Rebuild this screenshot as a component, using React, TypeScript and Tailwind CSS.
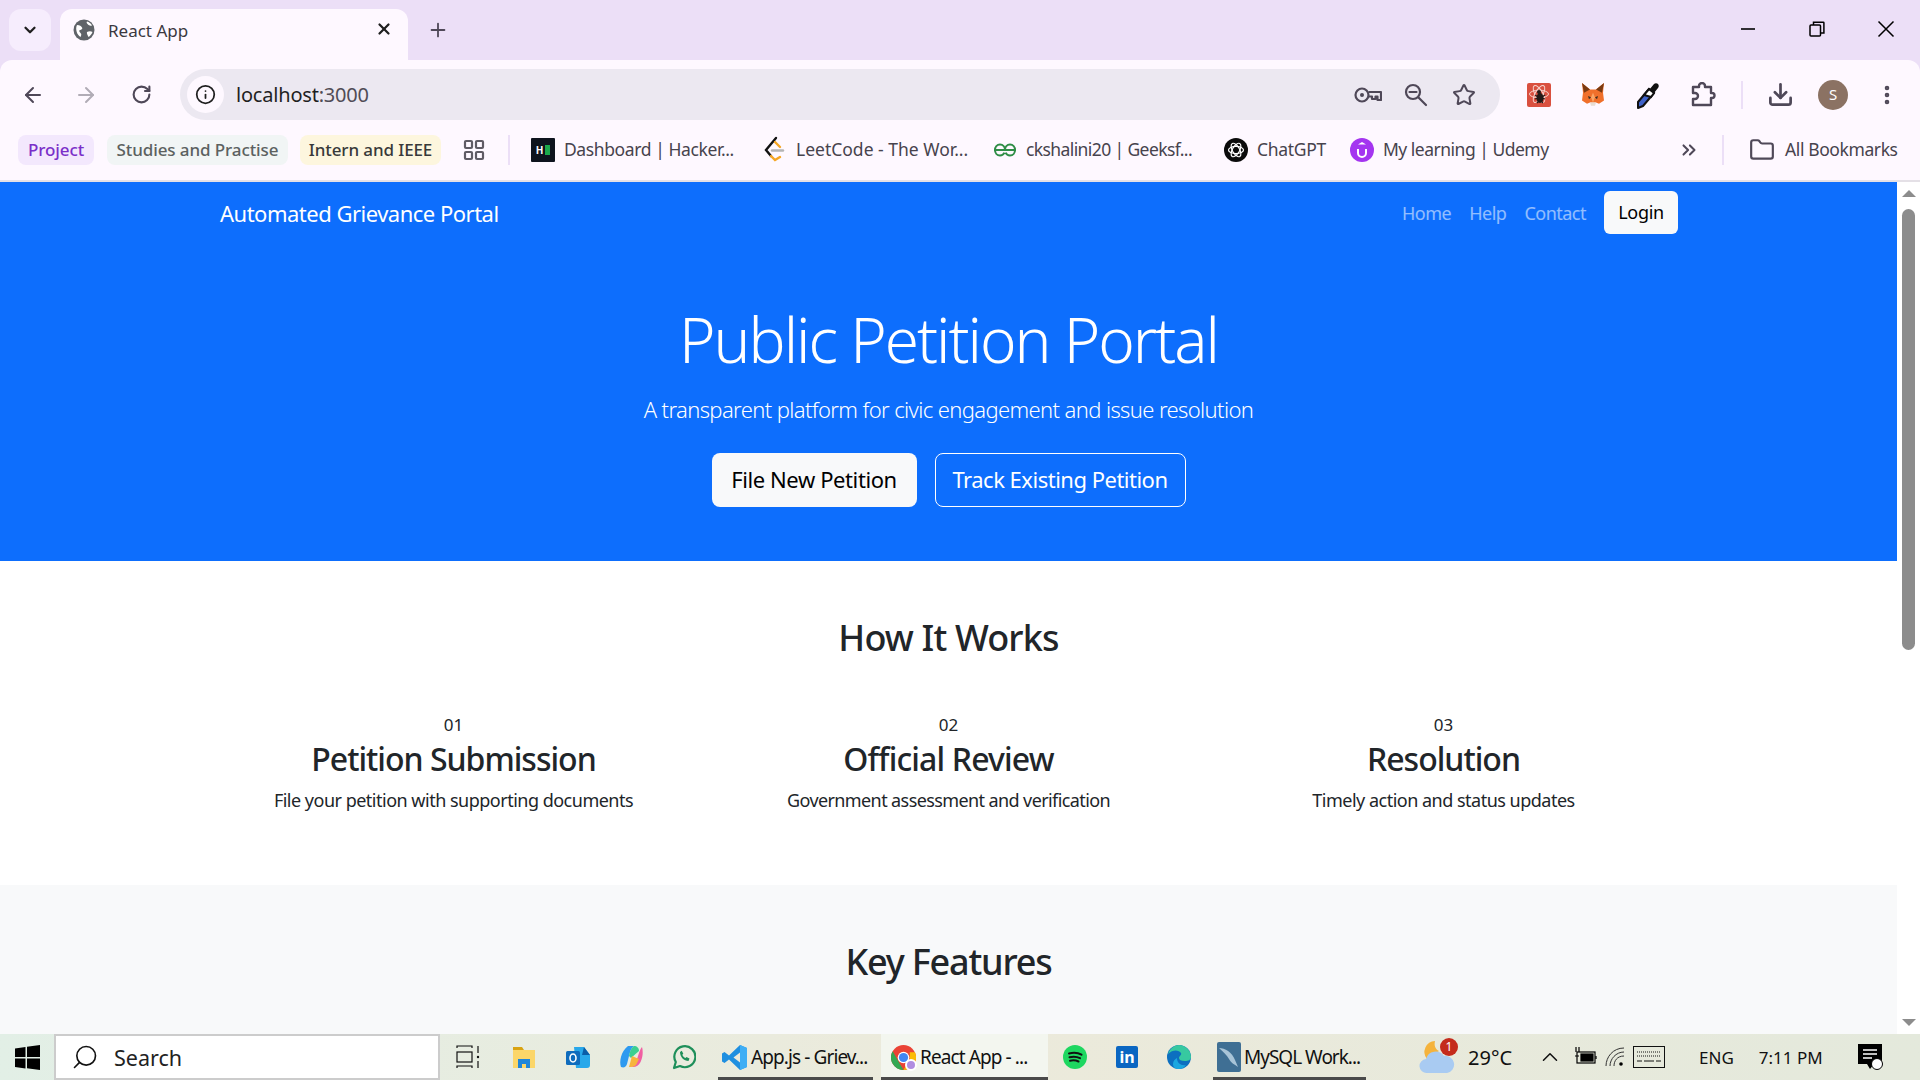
import React from 'react';
import { ArrowLeft, ArrowRight, ChevronDown, ChevronUp, ChevronsRight, Download, EllipsisVertical, Folder, Info, LayoutGrid, Plus, RotateCw, Search, Star, X } from 'lucide-react';

const Slot = ({ w, children }: { w: string; children: React.ReactNode }) => (
  <div className={`flex shrink-0 items-center justify-center ${w}`}>{children}</div>
);

const Globe = () => (
  <svg width="22" height="22" viewBox="0 0 22 22">
    <circle cx="11" cy="11" r="10.5" fill="#5f6368" />
    <path d="M4 6c3 0 4 1 5 2.500s-1 2.500-2 2.500-1 2 .5 3 .5 3 0 4C4 16 2 10 4 6zM14 2.500c2 .5 4 2 5 4-2 .5-3 0-4-1s-2-2-1-3zM14 13c2-1 4-1 5.500 0-1 2.500-2.500 4-4 5-1-2-2-4-1.500-5z" fill="#fff" />
  </svg>
);

const WindowControls = () => (
  <div className="ml-auto flex items-center">
    <Slot w="w-[69px]">
      <svg width="16" height="16" viewBox="0 0 16 16"><path d="M1 8h14" stroke="#000" strokeWidth="1.6" /></svg>
    </Slot>
    <Slot w="w-[69px]">
      <svg width="16" height="16" viewBox="0 0 16 16" fill="none" stroke="#000" strokeWidth="1.5">
        <rect x="1" y="4" width="10.5" height="11" rx="1" />
        <path d="M4.500 4V1.200h9.800a.6.6 0 0 1 .6.6V12h-3.400" />
      </svg>
    </Slot>
    <Slot w="w-[69px]">
      <svg width="18" height="18" viewBox="0 0 18 18"><path d="M1.500 1.500l15 15M16.500 1.500l-15 15" stroke="#000" strokeWidth="1.5" /></svg>
    </Slot>
  </div>
);

const KeyIcon = () => (
  <svg width="28" height="16" viewBox="0 0 28 16" fill="none" stroke="#4f4858" strokeWidth="2.2" strokeLinejoin="round">
    <circle cx="8" cy="8" r="6.500" />
    <circle cx="8" cy="8" r="2" fill="#4f4858" stroke="none" />
    <path d="M14.500 5H27v8h-3.500v-3.500h-2V12H18v-2.500h-3.500" />
  </svg>
);

const ZoomIcon = () => (
  <svg width="24" height="24" viewBox="0 0 24 24" fill="none" stroke="#4f4858" strokeWidth="2.200" strokeLinecap="round">
    <circle cx="9" cy="9" r="7" />
    <path d="M14.500 14.500L22 22M5.500 9h7" />
  </svg>
);

const ReactBug = () => (
  <svg width="24" height="24" viewBox="0 0 24 24">
    <rect width="24" height="24" rx="2" fill="#d9503f" />
    <g fill="none" stroke="#f7d5cf" strokeWidth="1">
      <ellipse cx="12" cy="11" rx="9.500" ry="3.800" />
      <ellipse cx="12" cy="11" rx="9.500" ry="3.800" transform="rotate(60 12 11)" />
      <ellipse cx="12" cy="11" rx="9.500" ry="3.800" transform="rotate(120 12 11)" />
    </g>
    <ellipse cx="13" cy="15" rx="3.500" ry="5" fill="#231a18" />
    <circle cx="12" cy="9" r="2" fill="#231a18" />
    <path d="M8 12l3 2M8 16l3-1M10 20l2-2M18 12l-3 2M18 16l-3-1M16 20l-2-2" stroke="#231a18" strokeWidth="1.200" />
  </svg>
);

const Fox = () => (
  <svg width="24" height="26" viewBox="0 0 24 24" preserveAspectRatio="none">
    <path d="M1 1l8 6h6l8-6-1 9 1 7-5 3-3-1H9l-3 1-5-3 1-7z" fill="#f0702b" />
    <path d="M1 1l8 6-6 3zM23 1l-8 6 6 3z" fill="#7a3a12" />
    <path d="M9 19h6l-1 3h-4z" fill="#e8ddd2" />
    <path d="M7 13l3 1-2 2zM17 13l-3 1 2 2z" fill="#3a2a20" />
    <path d="M10 14l2 5 2-5-2-4z" fill="#f9a666" />
  </svg>
);

const Dropper = () => (
  <svg width="26" height="28" viewBox="0 0 26 28">
    <path d="M3 21L14 8l5 4L8 25l-5 2z" fill="#3f62c9" stroke="#111" strokeWidth="2" strokeLinejoin="round" />
    <path d="M9 14l5-6 5 4-3 4z" fill="#fff" stroke="#111" strokeWidth="2" />
    <path d="M14 9l5-6c1-1 3-1 4 0s1 3 0 4l-4 5z" fill="#111" />
  </svg>
);

const PuzzleIcon = () => (
  <svg width="26" height="26" viewBox="0 0 26 26" fill="none" stroke="#4f4858" strokeWidth="2.400" strokeLinejoin="round">
    <path d="M3 5h6V4a3 3 0 0 1 6 0v1h6v6h1a2.500 2.500 0 0 1 0 5h-1v7H3v-6h2a2.800 2.800 0 0 0 0-6H3z" />
  </svg>
);

const Chip = ({ text, className }: { text: string; className: string }) => (
  <div className={`flex h-[30px] items-center justify-center rounded-lg text-[17px] font-medium tracking-[-0.1px] ${className}`}>{text}</div>
);

const Hacker = () => (
  <div className="flex h-6 w-6 items-center justify-center gap-[2px] rounded-[1px] bg-[#0e141e]">
    <span className="text-[10px] leading-none font-bold text-white">H</span>
    <span className="h-[10px] w-[5px] bg-[#1ba94c]" />
  </div>
);

const LeetIcon = () => (
  <svg width="24" height="28" viewBox="0 0 24 28" fill="none" strokeWidth="2.400" strokeLinecap="round">
    <path d="M13 2L3 14l5 6" stroke="#111" />
    <path d="M8 20l4 4 5-3M12 6l5 5" stroke="#f5a623" />
    <path d="M9 14.500h11" stroke="#b5b5b5" />
  </svg>
);

const Gfg = () => (
  <svg width="24" height="14" viewBox="0 0 24 14" fill="none" stroke="#2f8d46" strokeWidth="2">
    <path d="M1 7h22M12 7c0-3-2-5.500-5-5.500S2 4 2 7s2 5.500 5 5.500c2 0 3.600-1 4.400-2.800M12 7c0-3 2-5.500 5-5.500S22 4 22 7s-2 5.500-5 5.500c-2 0-3.600-1-4.400-2.800" />
  </svg>
);

const Gpt = () => (
  <svg width="24" height="24" viewBox="0 0 24 24">
    <circle cx="12" cy="12" r="12" fill="#0b0b0b" />
    <g fill="none" stroke="#fff" strokeWidth="1.200">
      <ellipse cx="12" cy="12" rx="7.500" ry="3.600" />
      <ellipse cx="12" cy="12" rx="7.500" ry="3.600" transform="rotate(60 12 12)" />
      <ellipse cx="12" cy="12" rx="7.500" ry="3.600" transform="rotate(120 12 12)" />
    </g>
  </svg>
);

const Udemy = () => (
  <svg width="24" height="24" viewBox="0 0 24 24">
    <circle cx="12" cy="12" r="12" fill="#a435f0" />
    <path d="M8 11v4a4 4 0 0 0 8 0v-4" fill="none" stroke="#fff" strokeWidth="2" />
    <path d="M12 4l4 2.500h-8z" fill="#fff" />
  </svg>
);

const Bookmark = ({ icon, text, w, track }: { icon: React.ReactNode; text: string; w: string; track: string }) => (
  <div className={`flex shrink-0 items-center ${w}`}>
    <div className="flex w-[24px] shrink-0 items-center justify-center">{icon}</div>
    <span className={`mb-[1px] ml-[9px] text-[17.5px] whitespace-nowrap text-[#47434d] ${track}`}>{text}</span>
  </div>
);

const BrowserChrome = () => (
  <div className="shrink-0 bg-[#ecdff7]">
    <div className="flex h-[60px] items-start">
      <div className="mt-[9px] ml-[9px] flex h-[42px] w-[42px] items-center justify-center rounded-xl bg-[#f6edfd]">
        <ChevronDown size={18} strokeWidth={3} className="text-[#1f1f1f]" />
      </div>
      <div className="mt-[9px] ml-[9px] flex h-[51px] w-[348px] items-start rounded-t-xl bg-[#fef8ff] pt-[10px] pl-[13px]">
        <Globe />
        <span className="mt-[1px] ml-[13px] text-[17px] leading-[22px] text-[#3b3840]">React App</span>
        <X size={18} strokeWidth={3} className="mt-[1px] mr-[15px] ml-auto text-[#1f1f1f]" />
      </div>
      <Plus size={22} strokeWidth={2} className="mt-[19px] ml-[19px] text-[#4f4858]" />
      <div className="mt-[-1px] ml-auto flex h-[60px] items-center self-start">
        <WindowControls />
      </div>
    </div>
    <div className="flex h-[60px] items-start rounded-t-xl bg-[#fef8ff] pt-[9px]">
      <Slot w="w-[66px] h-[51px]"><ArrowLeft size={24} strokeWidth={2} className="text-[#4f4858]" /></Slot>
      <Slot w="w-[40px] h-[51px]"><ArrowRight size={24} strokeWidth={2} className="text-[#b1acb6]" /></Slot>
      <Slot w="w-[70px] h-[51px]"><RotateCw size={21} strokeWidth={2.4} className="text-[#4f4858]" /></Slot>
      <div className="ml-[4px] flex h-[51px] w-[1320px] shrink-0 items-center rounded-full bg-[#ece8f1] pl-[7px]">
        <div className="flex h-[37px] w-[37px] items-center justify-center rounded-full bg-[#fef8ff]">
          <Info size={21} strokeWidth={2} className="text-[#1f1f1f]" />
        </div>
        <span className="ml-[12px] text-[20px] tracking-[-0.2px] text-[#1f1f1f]">localhost<span className="text-[#504c56]">:3000</span></span>
        <div className="ml-auto flex items-center pr-[12px] text-[#4f4858]">
          <Slot w="w-[48px]"><KeyIcon /></Slot>
          <Slot w="w-[48px]"><ZoomIcon /></Slot>
          <Slot w="w-[48px]"><Star size={24} strokeWidth={2} /></Slot>
        </div>
      </div>
      <div className="flex h-[51px] items-center">
        <div className="w-[12px]" />
        <Slot w="w-[54px]"><ReactBug /></Slot>
        <Slot w="w-[54px]"><Fox /></Slot>
        <Slot w="w-[56px]"><Dropper /></Slot>
        <Slot w="w-[54px]"><PuzzleIcon /></Slot>
        <div className="ml-[11px] h-[28px] w-[2px] bg-[#ecdff7]" />
        <Slot w="w-[74px]"><Download size={27} strokeWidth={2.4} className="text-[#4f4858]" /></Slot>
        <div className="ml-[1px] flex h-[30px] w-[30px] items-center justify-center rounded-full bg-[#8b7263] text-[15px] text-white">S</div>
        <Slot w="w-[78px]"><EllipsisVertical size={24} strokeWidth={2.6} className="text-[#4f4858]" /></Slot>
      </div>
    </div>
    <div className="flex h-[62px] items-center border-b-2 border-[#e4e0e6] bg-[#fef8ff]">
      <Chip text="Project" className="ml-[18px] w-[76px] bg-[#f3e8fd] text-[#7b2fc9]" />
      <Chip text="Studies and Practise" className="ml-[13px] w-[181px] bg-[#f1f5f5] text-[#5c6160]" />
      <Chip text="Intern and IEEE" className="ml-[12px] w-[141px] bg-[#fdf6de] text-[#38393a]" />
      <LayoutGrid size={24} strokeWidth={2.2} className="ml-[21px] shrink-0 text-[#5f5b64]" />
      <div className="ml-[22px] h-[30px] w-[2px] shrink-0 bg-[#ecdff7]" />
      <div className="w-[21px] shrink-0" />
      <Bookmark icon={<Hacker />} text="Dashboard | Hacker..." w="w-[232px]" track="tracking-[-0.4px]" />
      <Bookmark icon={<LeetIcon />} text="LeetCode - The Wor..." w="w-[230px]" track="tracking-[0px]" />
      <Bookmark icon={<Gfg />} text="ckshalini20 | Geeksf..." w="w-[231px]" track="tracking-[-0.6px]" />
      <Bookmark icon={<Gpt />} text="ChatGPT" w="w-[126px]" track="tracking-[-0.3px]" />
      <Bookmark icon={<Udemy />} text="My learning | Udemy" w="w-[270px]" track="tracking-[-0.5px]" />
      <ChevronsRight size={22} strokeWidth={2.2} className="ml-[58px] shrink-0 text-[#4f4858]" />
      <div className="ml-[22px] h-[30px] w-[2px] shrink-0 bg-[#ecdff7]" />
      <Folder size={26} strokeWidth={2} className="ml-[25px] shrink-0 text-[#4f4858]" />
      <span className="mb-[1px] ml-[10px] text-[17.5px] tracking-[-0.4px] whitespace-nowrap text-[#47434d]">All Bookmarks</span>
    </div>
  </div>
);

const steps = [
  { n: '01', title: 'Petition Submission', text: 'File your petition with supporting documents', track: 'tracking-[-1px]', sub: 'tracking-[-0.5px]' },
  { n: '02', title: 'Official Review', text: 'Government assessment and verification', track: 'tracking-[-0.85px]', sub: 'tracking-[-0.6px]' },
  { n: '03', title: 'Resolution', text: 'Timely action and status updates', track: 'tracking-[-1px]', sub: 'tracking-[-0.5px]' },
];

const Page = () => (
  <div className="min-w-0 flex-1 overflow-hidden bg-white">
    <section className="h-[379px] bg-[#0d6efd] text-white">
      <nav className="flex h-[62px] items-center pr-[219px] pl-[220px]">
        <span className="text-[22px] tracking-[-0.5px]">Automated Grievance Portal</span>
        <div className="ml-auto flex items-center text-[18px] tracking-[-0.5px] text-white/55">
          <span>Home</span>
          <span className="ml-[18px]">Help</span>
          <span className="ml-[18px]">Contact</span>
          <button className="mb-[2px] ml-[18px] h-[43px] w-[74px] rounded-md bg-[#f8f9fa] text-[18px] tracking-[-0.3px] text-black">Login</button>
        </div>
      </nav>
      <div className="flex flex-col items-center">
        <h1 className="mt-[50px] text-[62px] leading-[90px] font-light tracking-[-2px]">Public Petition Portal</h1>
        <p className="mt-[8px] text-[22px] leading-[34px] font-light tracking-[-0.62px]">A transparent platform for civic engagement and issue resolution</p>
        <div className="mt-[27px] flex gap-[18px]">
          <button className="h-[54px] w-[205px] rounded-lg bg-[#f8f9fa] pb-[2px] text-[22px] tracking-[-0.4px] text-black">File New Petition</button>
          <button className="h-[54px] w-[251px] rounded-lg border border-white pb-[2px] text-[22px] tracking-[-0.5px] text-white">Track Existing Petition</button>
        </div>
      </div>
    </section>
    <section className="h-[324px] text-[#212529]">
      <h2 className="pt-[52px] text-center text-[36px] leading-[50px] font-medium tracking-[-0.85px]">How It Works</h2>
      <div className="mt-[49px] grid grid-cols-3 px-[206px]">
        {steps.map((s) => (
          <div key={s.n} className="flex flex-col items-center">
            <span className="text-[17px] leading-[26px]">{s.n}</span>
            <h3 className={`text-[32px] leading-[42px] font-medium ${s.track}`}>{s.title}</h3>
            <p className={`mt-[7px] text-[18px] leading-[27px] ${s.sub}`}>{s.text}</p>
          </div>
        ))}
      </div>
    </section>
    <section className="h-[200px] bg-[#f8f9fa] text-[#212529]">
      <h2 className="pt-[52px] text-center text-[36px] leading-[50px] font-medium tracking-[-1.2px]">Key Features</h2>
    </section>
  </div>
);

const Scrollbar = () => (
  <div className="flex w-[23px] shrink-0 flex-col items-center bg-white">
    <div className="mt-[8px] h-0 w-0 border-x-[7px] border-b-[7px] border-x-transparent border-b-[#8c8c8c]" />
    <div className="mt-[12px] h-[441px] w-[13px] rounded-full bg-[#8c8c8c]" />
    <div className="mt-auto mb-[8px] h-0 w-0 border-x-[7px] border-t-[7px] border-x-transparent border-t-[#8c8c8c]" />
  </div>
);

const WinLogo = () => (
  <svg width="25" height="25" viewBox="0 0 25 25" fill="#000">
    <path d="M0 3.400L10.500 2v10H0zM12 1.800L25 0v12H12zM0 13.500h10.500v10L0 22zM12 13.500h13V25l-13-1.800z" />
  </svg>
);

const TaskView = () => (
  <svg width="24" height="24" viewBox="0 0 24 24" fill="none" stroke="#111" strokeWidth="1.200">
    <path d="M1 3V1h15v2M1 23v-2h15v2" />
    <rect x="1" y="7" width="15" height="10" />
    <path d="M22 1v7M22 16v7" />
    <circle cx="22" cy="12" r="1.200" fill="#111" stroke="none" />
  </svg>
);

const Explorer = () => (
  <svg width="24" height="24" viewBox="0 0 24 24">
    <path d="M1 2h9l2 3H1z" fill="#d9a311" />
    <rect x="1" y="5" width="22" height="18" fill="#fbd669" />
    <path d="M6 14h12v9h-4v-4h-4v4H6z" fill="#1f86d9" />
  </svg>
);

const Outlook = () => (
  <svg width="24" height="24" viewBox="0 0 24 24">
    <path d="M8 2h10l6 8v10a3 3 0 0 1-3 3H10z" fill="#28a8ea" />
    <path d="M18 2l6 8h-8z" fill="#0a5ea8" />
    <rect y="6" width="14" height="14" rx="1.500" fill="#0f6cbd" />
    <ellipse cx="7" cy="13" rx="3" ry="4" fill="none" stroke="#fff" strokeWidth="1.600" />
  </svg>
);

const Copilot = () => (
  <svg width="24" height="24" viewBox="0 0 24 24">
    <path d="M9 1h6c-3 2-4 6-5 10l-2 8c-1 3-3 4-6 3-2-5 0-16 7-21z" fill="#2e9af0" />
    <path d="M9 22c4 0 7-1 8-5l3-9c1-3 2-5 3-6 2 6 0 20-9 20z" fill="#f15fa2" />
    <path d="M10 11c1-5 2-8 5-10 3 0 5 2 5 5l-8 7z" fill="#3ccf91" />
    <path d="M13 11l7 3-3 6c-2 2-5 2-7 2z" fill="#f7b43c" />
  </svg>
);

const WhatsApp = () => (
  <svg width="24" height="26" viewBox="0 0 24 26" fill="none" stroke="#1e8f5a" strokeWidth="2.200">
    <path d="M2 24l1.800-6A10.500 10.500 0 1 1 8 22z" strokeLinejoin="round" />
    <path d="M8 8c0 5 4 9 8.500 9l1-2.500-3-1.500-1 1c-1.500-.5-2.700-1.800-3.200-3.200l1-1-1.500-3z" fill="#1e8f5a" stroke="none" />
  </svg>
);

const VsCode = () => (
  <svg width="25" height="25" viewBox="0 0 25 25" className="shrink-0">
    <path d="M18 0l7 3v19l-7 3L7 14.500 2.500 18 0 16.500v-8L2.500 7 7 10.500z" fill="#1f8fe0" />
    <path d="M18 0l7 3v19l-7 3z" fill="#3eaef5" />
    <path d="M18 7.500l-6.500 5 6.500 5z" fill="#eceadb" />
  </svg>
);

const ChromeLogo = () => (
  <div className="relative h-[25px] w-[25px] shrink-0">
    <svg width="25" height="25" viewBox="0 0 24 24">
      <circle cx="12" cy="12" r="12" fill="#ea4335" />
      <path d="M12 24A12 12 0 0 1 1.600 6l6 10.500z" fill="#34a853" />
      <path d="M12 24l6-10.400V7h5A12 12 0 0 1 12 24z" fill="#fbbc04" />
      <circle cx="12" cy="12" r="5.600" fill="#fff" />
      <circle cx="12" cy="12" r="4.400" fill="#4285f4" />
    </svg>
    <div className="absolute right-[-1px] bottom-[-1px] h-[12px] w-[12px] rounded-full border-2 border-white bg-[#b08de0]" />
  </div>
);

const Spotify = () => (
  <svg width="24" height="24" viewBox="0 0 24 24">
    <circle cx="12" cy="12" r="12" fill="#1ed760" />
    <g fill="none" stroke="#111" strokeWidth="2" strokeLinecap="round">
      <path d="M6 8.500c4-1 9-.8 12.500 1.200" />
      <path d="M6.500 12.200c3.500-.8 7.500-.6 10.500 1" />
      <path d="M7 15.700c3-.6 6-.4 8.500.8" />
    </g>
  </svg>
);

const LinkedIn = () => (
  <div className="flex h-[22px] w-[22px] items-center justify-center rounded-[2px] bg-[#0a66c2] text-[16px] leading-none font-bold text-white">in</div>
);

const Edge = () => (
  <svg width="24" height="24" viewBox="0 0 24 24">
    <circle cx="12" cy="12" r="12" fill="#0c6fc0" />
    <path d="M1 9C3 3 8 0 12 0c6 0 12 5 12 12 0 3-3 4-6 4-4 0-6-1-6-3s3-3 2-5c-2-3-8-4-13 1z" fill="#37c9a0" />
    <path d="M10 13c0 5 4 8 9 7-2 3-5 4-7 4C8 24 6 22 6 19s2-5 4-6z" fill="#1aa7e0" />
  </svg>
);

const MySql = () => (
  <svg width="24" height="30" viewBox="0 0 24 30" className="shrink-0">
    <rect width="24" height="30" rx="2" fill="#3f6f94" />
    <path d="M2 6c6 0 13 4 16 12l3 7c-4-3-7-4-9-8S6 10 2 6z" fill="#a8c4d8" />
  </svg>
);

const Weather = () => (
  <div className="relative h-[34px] w-[36px]">
    <svg width="36" height="34" viewBox="0 0 36 34" className="mt-[2px]">
      <path d="M16 0a11 11 0 0 0-8 18l12-8c-4-2-5-6-4-10z" fill="#f5b33c" />
      <path d="M8 32a7 7 0 0 1-1-14 10 10 0 0 1 18-3 8.500 8.500 0 0 1 3 17z" fill="#a9cbf2" />
    </svg>
    <div className="absolute top-[-3px] right-[-3px] flex h-[18px] w-[18px] items-center justify-center rounded-full bg-[#c42b1c] text-[12px] leading-none text-white">1</div>
  </div>
);

const BatteryIcon = () => (
  <svg width="24" height="20" viewBox="0 0 24 20" fill="none" stroke="#000" strokeWidth="1.200">
    <rect x="3" y="5" width="18" height="11" />
    <rect x="7" y="7" width="12" height="7" fill="#000" />
    <path d="M22 9v3M1 9h4M2 0v5M5 0v5" />
  </svg>
);

const WifiIcon = () => (
  <svg width="20" height="20" viewBox="0 0 20 20" fill="none" stroke="#333" strokeWidth="1">
    <path d="M1 19C1 10 8 1 19 1M5 19c0-7 6-14 14-14M9 19c0-5 3-10 10-10" />
    <circle cx="16" cy="17" r="1.800" fill="#000" stroke="none" />
  </svg>
);

const KeyboardIcon = () => (
  <svg width="32" height="22" viewBox="0 0 32 22" fill="none" stroke="#111" strokeWidth="1">
    <rect x=".5" y=".5" width="31" height="21" />
    <path d="M4 6h24M4 10h24" strokeDasharray="1 1" />
    <path d="M4 15h5M11 15h10M23 15h5" />
  </svg>
);

const Notif = () => (
  <svg width="26" height="28" viewBox="0 0 26 28">
    <path d="M1 1h24v20h-8l-4 5-3-5H1z" fill="#000" />
    <path d="M6 7h14M6 11h14M6 15h9" stroke="#fff" strokeWidth="1.500" />
    <circle cx="20" cy="21" r="5.500" fill="#fff" stroke="#000" />
  </svg>
);

const Taskbar = () => (
  <div className="flex h-[46px] shrink-0 items-center bg-gradient-to-r from-[#e2efe6] via-[#eceadb] to-[#e4e9dc] text-[#111]">
    <Slot w="w-[54px]"><WinLogo /></Slot>
    <div className="flex h-[46px] w-[386px] shrink-0 items-center border-2 border-[#cccccc] bg-white pl-[15px]">
      <Search size={28} strokeWidth={1.4} className="-scale-x-100 text-[#111]" />
      <span className="mt-[2px] ml-[15px] text-[21.5px] text-[#222]">Search</span>
    </div>
    <Slot w="w-[56px]"><TaskView /></Slot>
    <Slot w="w-[56px]"><Explorer /></Slot>
    <Slot w="w-[52px]"><Outlook /></Slot>
    <Slot w="w-[54px]"><Copilot /></Slot>
    <Slot w="w-[52px]"><WhatsApp /></Slot>
    <div className="ml-[8px] flex h-[46px] w-[155px] shrink-0 items-center gap-[4px] border-b-[3px] border-[#4a4a4a] pt-[3px] pl-[4px]">
      <VsCode />
      <span className="text-[19px] tracking-[-0.9px] whitespace-nowrap">App.js - Griev...</span>
    </div>
    <div className="ml-[8px] flex h-[46px] w-[167px] shrink-0 items-center gap-[4px] border-b-[3px] border-[#4a4a4a] bg-[#f3f6ef] pt-[3px] pl-[10px]">
      <ChromeLogo />
      <span className="text-[19px] tracking-[-0.9px] whitespace-nowrap">React App - ...</span>
    </div>
    <Slot w="w-[54px]"><Spotify /></Slot>
    <Slot w="w-[50px]"><LinkedIn /></Slot>
    <Slot w="w-[54px]"><Edge /></Slot>
    <div className="ml-[7px] flex h-[46px] w-[153px] shrink-0 items-center gap-[3px] border-b-[3px] border-[#4a4a4a] pt-[3px] pl-[4px]">
      <MySql />
      <span className="text-[19px] tracking-[-1px] whitespace-nowrap">MySQL Work...</span>
    </div>
    <div className="ml-[53px] shrink-0"><Weather /></div>
    <span className="mt-[2px] ml-[13px] text-[20px]">29°C</span>
    <ChevronUp size={26} strokeWidth={1.4} className="ml-[25px] shrink-0" />
    <div className="ml-[11px] shrink-0"><BatteryIcon /></div>
    <div className="ml-[7px] shrink-0"><WifiIcon /></div>
    <div className="ml-[8px] shrink-0"><KeyboardIcon /></div>
    <span className="mt-[2px] ml-[34px] text-[17px]">ENG</span>
    <span className="mt-[2px] ml-[25px] text-[17px] whitespace-nowrap">7:11 PM</span>
    <div className="ml-[34px] shrink-0"><Notif /></div>
  </div>
);

export default function App() {
  return (
    <div className="flex h-screen w-[1920px] flex-col overflow-hidden font-['Noto_Sans',sans-serif]">
      <BrowserChrome />
      <div className="flex min-h-0 flex-1">
        <Page />
        <Scrollbar />
      </div>
      <Taskbar />
    </div>
  );
}
